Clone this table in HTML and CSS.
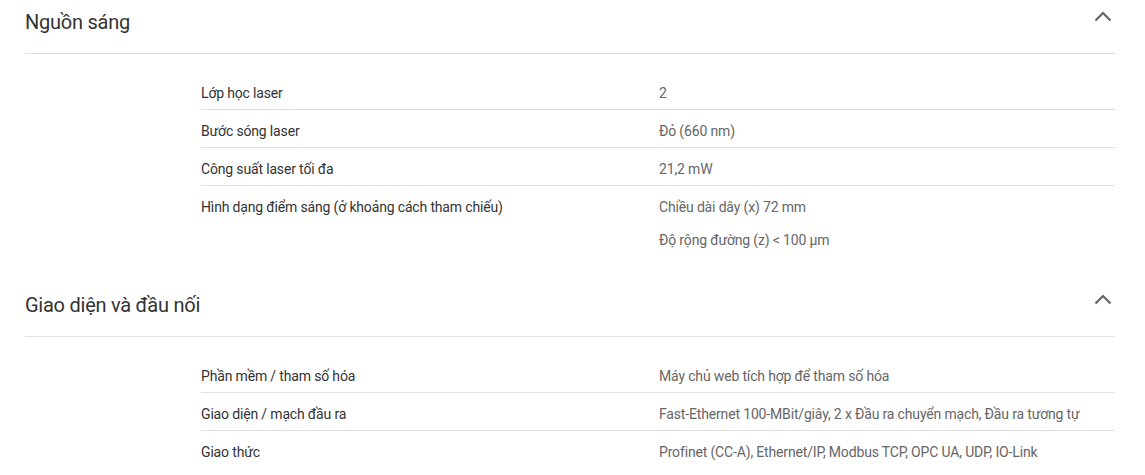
FILE: index.html
```html
<!DOCTYPE html>
<html lang="vi">
<head>
<meta charset="utf-8">
<link rel="stylesheet" href="styles.css">
</head>
<body>
<div class="page">
  <section class="group">
    <div class="group-head">
      <h2 class="group-title">Nguồn sáng</h2>
      <svg class="chev" width="18" height="11" viewBox="0 0 18 11"><path d="M1.5 9.5 L9 2 L16.5 9.5" fill="none" stroke="#666" stroke-width="2.2"/></svg>
    </div>
    <div class="specs">
      <div class="row"><div class="label">Lớp học laser</div><div class="vals"><div class="val">2</div></div></div>
      <div class="row"><div class="label">Bước sóng laser</div><div class="vals"><div class="val">Đỏ (660 nm)</div></div></div>
      <div class="row"><div class="label">Công suất laser tối đa</div><div class="vals"><div class="val">21,2 mW</div></div></div>
      <div class="row"><div class="label">Hình dạng điểm sáng (ở khoảng cách tham chiếu)</div><div class="vals"><div class="val">Chiều dài dây (x) 72 mm</div><div class="val">Độ rộng đường (z) &lt; 100 µm</div></div></div>
    </div>
  </section>
  <section class="group">
    <div class="group-head">
      <h2 class="group-title">Giao diện và đầu nối</h2>
      <svg class="chev" width="18" height="11" viewBox="0 0 18 11"><path d="M1.5 9.5 L9 2 L16.5 9.5" fill="none" stroke="#666" stroke-width="2.2"/></svg>
    </div>
    <div class="specs">
      <div class="row"><div class="label">Phần mềm / tham số hóa</div><div class="vals"><div class="val">Máy chủ web tích hợp để tham số hóa</div></div></div>
      <div class="row"><div class="label">Giao diện / mạch đầu ra</div><div class="vals"><div class="val">Fast-Ethernet 100-MBit/giây, 2 x Đầu ra chuyển mạch, Đầu ra tương tự</div></div></div>
      <div class="row"><div class="label">Giao thức</div><div class="vals"><div class="val">Profinet (CC-A), Ethernet/IP, Modbus TCP, OPC UA, UDP, IO-Link</div></div></div>
    </div>
  </section>
</div>
</body>
</html>
```

FILE: styles.css
```css
* { box-sizing: border-box; }
html, body { margin: 0; padding: 0; background: #fff; }
body { font-family: Roboto, "Liberation Sans", sans-serif; color: #333; }
.page { padding: 0 30px 0 25px; }
.group { padding-bottom: 27px; }
.group-head {
  display: flex;
  justify-content: space-between;
  align-items: flex-start;
  padding: 8px 0 17px;
  border-bottom: 1px solid #e0e0e0;
}
.group-title {
  margin: 0;
  font-size: 20px;
  font-weight: 400;
  line-height: 28px;
  letter-spacing: -0.25px;
  color: #333;
}
.chev { margin: 3px 3px 0 0; }
.specs { padding: 18px 0 0 176px; }
.row {
  display: grid;
  grid-template-columns: 458px 1fr;
  padding: 11px 0 6px;
  border-bottom: 1px solid #e0e0e0;
  font-size: 14px;
  line-height: 20px;
  letter-spacing: -0.16px;
}
.row:last-child { border-bottom: none; }
.label { color: #333; }
.vals { display: flex; flex-direction: column; gap: 13px; color: #666; }
```
